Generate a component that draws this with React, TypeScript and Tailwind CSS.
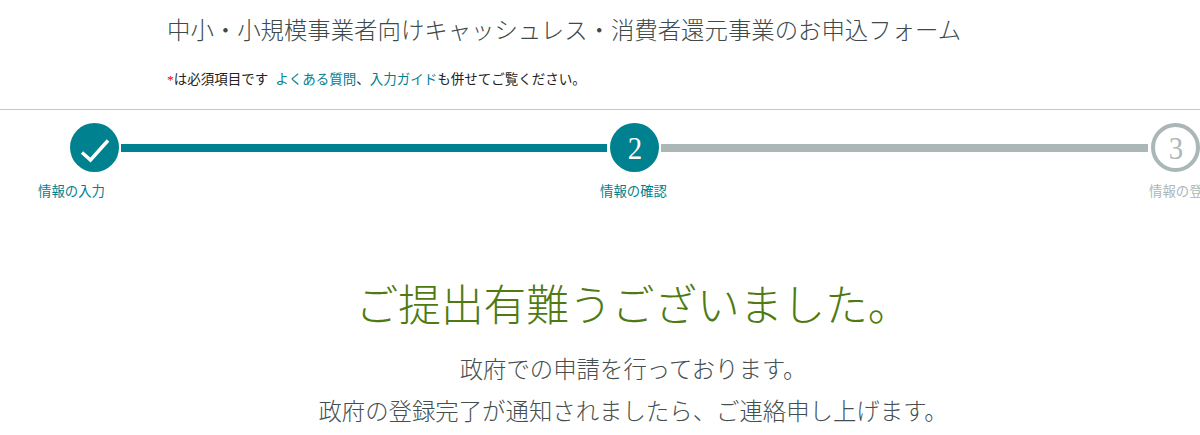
const serif = "font-['Liberation_Serif','Noto_Sans_CJK_JP',serif]";

function CheckIcon() {
  return (
    <svg width="32" height="30" viewBox="0 0 32 30" fill="none">
      <path d="M3 19.5 L11.5 27 L29 7.5" stroke="#fff" strokeWidth="3.4" />
    </svg>
  );
}

export default function App() {
  return (
    <div className={`h-[435px] w-[1200px] overflow-hidden bg-white ${serif} font-light`}>
      {/* ヘッダー */}
      <div className="h-[110px] border-b-[1.5px] border-[#c8c8c8] pl-[167px] pt-[15px]">
        <h1 className="whitespace-nowrap text-[23.4px] font-light leading-[32px] text-[#3c4a4a]">
          中小・小規模事業者向けキャッシュレス・消費者還元事業のお申込フォーム
        </h1>
        <p className="mt-[24px] whitespace-nowrap text-[13.5px] font-normal leading-[18px] text-[#222]">
          <span className="text-[#e60000]">*</span>は必須項目です
          <a className="ml-[7px] text-[#00818f]">よくある質問</a>、
          <a className="text-[#00818f]">入力ガイド</a>も併せてご覧ください。
        </p>
      </div>

      {/* ステップ */}
      <div className="flex items-center pl-[70px] pt-[13px]">
        <div className="flex h-[49px] w-[49px] shrink-0 items-center justify-center rounded-full bg-[#00818f]">
          <CheckIcon />
        </div>
        <div className="ml-[2px] h-[8px] w-[486px] shrink-0 bg-[#00818f]" />
        <div className="ml-[3px] flex h-[49px] w-[49px] shrink-0 items-center justify-center rounded-full bg-[#00818f] pt-[1px] text-[32px] font-normal text-white">
          <span className="inline-block scale-x-90">2</span>
        </div>
        <div className="ml-[2px] h-[8px] w-[487px] shrink-0 bg-[#abb7b7]" />
        <div className="ml-[3px] flex h-[49px] w-[49px] shrink-0 items-center justify-center rounded-full border-[4px] border-[#abb7b7] pt-[1px] text-[32px] text-[#abb7b7]">
          <span className="inline-block scale-x-90">3</span>
        </div>
      </div>
      <div className="mt-[10px] flex whitespace-nowrap pl-[38px] text-[13.4px] font-normal leading-[20px]">
        <span className="w-[562px] shrink-0 text-[#00818f]">情報の入力</span>
        <span className="w-[549px] shrink-0 text-[#00818f]">情報の確認</span>
        <span className="text-[#abb7b7]">情報の登録</span>
      </div>

      {/* 完了メッセージ */}
      <div className="ml-[66px] flex flex-col items-center whitespace-nowrap pt-[75px]">
        <h2 className="text-[42.7px] font-light leading-[60px] text-[#4f7a12]">ご提出有難うございました。</h2>
        <p className="mt-[12px] text-[23.4px] font-light leading-[42px] text-[#444f4f]">政府での申請を行っております。</p>
        <p className="text-[23.4px] font-light leading-[42px] text-[#444f4f]">政府の登録完了が通知されましたら、ご連絡申し上げます。</p>
      </div>
    </div>
  );
}
